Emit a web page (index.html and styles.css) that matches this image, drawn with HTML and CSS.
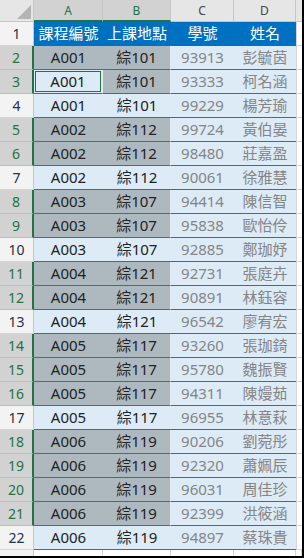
FILE: index.html
```html
<!DOCTYPE html>
<html lang="zh-Hant">
<head>
<meta charset="utf-8">
<title>課程表</title>
<link rel="stylesheet" href="styles.css">
</head>
<body>
<div class="sheet">
  <div class="row colhead">
    <div class="corner"><span class="tri"></span></div>
    <div class="ch sel">A</div>
    <div class="ch sel">B</div>
    <div class="ch">C</div>
    <div class="ch">D</div>
    <div class="ch last"></div>
  </div>
  <div class="row">
    <div class="rh">1</div>
    <div class="c h">課程編號</div>
    <div class="c h">上課地點</div>
    <div class="c h">學號</div>
    <div class="c h">姓名</div>
    <div class="e"></div>
  </div>
  <div class="row">
    <div class="rh sel">2</div>
    <div class="c s">A001</div>
    <div class="c s b">綜101</div>
    <div class="c g">93913</div>
    <div class="c g">彭毓茵</div>
    <div class="e"></div>
  </div>
  <div class="row">
    <div class="rh sel">3</div>
    <div class="c act">A001</div>
    <div class="c s b">綜101</div>
    <div class="c g">93333</div>
    <div class="c g">柯名涵</div>
    <div class="e"></div>
  </div>
  <div class="row">
    <div class="rh">4</div>
    <div class="c">A001</div>
    <div class="c">綜101</div>
    <div class="c g">99229</div>
    <div class="c g">楊芳瑜</div>
    <div class="e"></div>
  </div>
  <div class="row">
    <div class="rh sel">5</div>
    <div class="c s">A002</div>
    <div class="c s b">綜112</div>
    <div class="c g">99724</div>
    <div class="c g">黃伯晏</div>
    <div class="e"></div>
  </div>
  <div class="row">
    <div class="rh sel">6</div>
    <div class="c s">A002</div>
    <div class="c s b">綜112</div>
    <div class="c g">98480</div>
    <div class="c g">莊嘉盈</div>
    <div class="e"></div>
  </div>
  <div class="row">
    <div class="rh">7</div>
    <div class="c">A002</div>
    <div class="c">綜112</div>
    <div class="c g">90061</div>
    <div class="c g">徐雅慧</div>
    <div class="e"></div>
  </div>
  <div class="row">
    <div class="rh sel">8</div>
    <div class="c s">A003</div>
    <div class="c s b">綜107</div>
    <div class="c g">94414</div>
    <div class="c g">陳信智</div>
    <div class="e"></div>
  </div>
  <div class="row">
    <div class="rh sel">9</div>
    <div class="c s">A003</div>
    <div class="c s b">綜107</div>
    <div class="c g">95838</div>
    <div class="c g">歐怡伶</div>
    <div class="e"></div>
  </div>
  <div class="row">
    <div class="rh">10</div>
    <div class="c">A003</div>
    <div class="c">綜107</div>
    <div class="c g">92885</div>
    <div class="c g">鄭珈妤</div>
    <div class="e"></div>
  </div>
  <div class="row">
    <div class="rh sel">11</div>
    <div class="c s">A004</div>
    <div class="c s b">綜121</div>
    <div class="c g">92731</div>
    <div class="c g">張庭卉</div>
    <div class="e"></div>
  </div>
  <div class="row">
    <div class="rh sel">12</div>
    <div class="c s">A004</div>
    <div class="c s b">綜121</div>
    <div class="c g">90891</div>
    <div class="c g">林鈺容</div>
    <div class="e"></div>
  </div>
  <div class="row">
    <div class="rh">13</div>
    <div class="c">A004</div>
    <div class="c">綜121</div>
    <div class="c g">96542</div>
    <div class="c g">廖宥宏</div>
    <div class="e"></div>
  </div>
  <div class="row">
    <div class="rh sel">14</div>
    <div class="c s">A005</div>
    <div class="c s b">綜117</div>
    <div class="c g">93260</div>
    <div class="c g">張珈錡</div>
    <div class="e"></div>
  </div>
  <div class="row">
    <div class="rh sel">15</div>
    <div class="c s">A005</div>
    <div class="c s b">綜117</div>
    <div class="c g">95780</div>
    <div class="c g">魏振賢</div>
    <div class="e"></div>
  </div>
  <div class="row">
    <div class="rh sel">16</div>
    <div class="c s">A005</div>
    <div class="c s b">綜117</div>
    <div class="c g">94311</div>
    <div class="c g">陳嫚茹</div>
    <div class="e"></div>
  </div>
  <div class="row">
    <div class="rh">17</div>
    <div class="c">A005</div>
    <div class="c">綜117</div>
    <div class="c g">96955</div>
    <div class="c g">林意萩</div>
    <div class="e"></div>
  </div>
  <div class="row">
    <div class="rh sel">18</div>
    <div class="c s">A006</div>
    <div class="c s b">綜119</div>
    <div class="c g">90206</div>
    <div class="c g">劉菀彤</div>
    <div class="e"></div>
  </div>
  <div class="row">
    <div class="rh sel">19</div>
    <div class="c s">A006</div>
    <div class="c s b">綜119</div>
    <div class="c g">92320</div>
    <div class="c g">蕭姵辰</div>
    <div class="e"></div>
  </div>
  <div class="row">
    <div class="rh sel">20</div>
    <div class="c s">A006</div>
    <div class="c s b">綜119</div>
    <div class="c g">96031</div>
    <div class="c g">周佳珍</div>
    <div class="e"></div>
  </div>
  <div class="row">
    <div class="rh sel">21</div>
    <div class="c s">A006</div>
    <div class="c s b">綜119</div>
    <div class="c g">92399</div>
    <div class="c g">洪筱涵</div>
    <div class="e"></div>
  </div>
  <div class="row">
    <div class="rh">22</div>
    <div class="c">A006</div>
    <div class="c">綜119</div>
    <div class="c g">94897</div>
    <div class="c g">蔡珠貴</div>
    <div class="e"></div>
  </div>
  <div class="row tail">
    <div class="rh"></div>
    <div class="w"></div>
    <div class="w"></div>
    <div class="w"></div>
    <div class="w"></div>
    <div class="w"></div>
  </div>
</div>
</body>
</html>
```

FILE: styles.css
```css
* { box-sizing: border-box; }
html, body { margin: 0; padding: 0; background: #fff; }

.sheet {
  width: 304px;
  height: 558px;
  border-right: 2px solid #000;
  border-bottom: 2px solid #000;
  display: grid;
  grid-template-rows: 22px repeat(22, 24px) 1fr;
  overflow: hidden;
  font-family: "Noto Sans", "Noto Sans CJK TC", sans-serif;
}

.row {
  display: grid;
  grid-template-columns: 34px 69px 68px 63px 62px 1fr;
  min-height: 0;
}

.corner {
  position: relative;
  background: #e6e6e6;
  border-right: 1px solid #c6c6c6;
  border-bottom: 1px solid #c6c6c6;
}
.tri {
  position: absolute;
  left: 17px;
  top: 5px;
  width: 14px;
  height: 14px;
  background: #b4b4b4;
  clip-path: polygon(100% 0, 100% 100%, 0 100%);
}

.ch {
  display: flex;
  align-items: center;
  justify-content: center;
  background: #e6e6e6;
  border-right: 1px solid #c6c6c6;
  border-bottom: 1px solid #c6c6c6;
  color: #444;
  font-size: 12px;
  line-height: 1;
  padding-top: 1px;
}
.ch.sel {
  background: #d2d2d2;
  color: #217346;
  border-bottom: 2px solid #217346;
}
.ch.last { border-right: none; }

.rh {
  display: flex;
  align-items: center;
  justify-content: center;
  background: #f3f3f3;
  border-right: 1px solid #c6c6c6;
  border-bottom: 1px solid #d5d5d5;
  color: #25304f;
  font-size: 14px;
  line-height: 1;
}
.rh.sel {
  background: #d2d2d2;
  color: #217346;
  border-right: 2px solid #217346;
  border-bottom-color: #bdbdbd;
}

.c {
  display: flex;
  align-items: center;
  justify-content: center;
  background: #ddebf7;
  border-bottom: 1px solid #1f73c4;
  color: #222;
  font-size: 15px;
  line-height: 1;
  white-space: nowrap;
}
.c.h {
  background: #0070c0;
  color: #fff;
  border-bottom-color: #0070c0;
}
.c.g { color: #858585; }
.c.s { background: #adb9bf; }
.c.b { border-right: 1px solid #e4eaee; }
.c.act {
  background: #ddebf7;
  box-shadow: inset 0 0 0 1px #ddebf7, inset 0 0 0 2px #217346;
  border-right: 1px solid #e4eaee;
}

.e {
  background: #fff;
  border-left: 1px solid #d4d4d4;
  border-bottom: 1px solid #d4d4d4;
}

.tail .w {
  background: #fff;
  border-right: 1px solid #d4d4d4;
}
.tail .rh { border-bottom: none; }
```
